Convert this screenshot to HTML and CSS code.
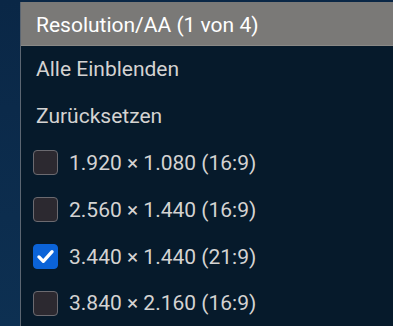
FILE: index.html
```html
<!DOCTYPE html>
<html lang="de">
<head>
<meta charset="utf-8">
<link rel="stylesheet" href="styles.css">
</head>
<body>
<div class="page">
  <div class="menu">
    <div class="menu-header">Resolution/AA (1 von 4)</div>
    <div class="menu-item">Alle Einblenden</div>
    <div class="menu-item">Zurücksetzen</div>
    <div class="menu-item check-item"><span class="box"></span><span>1.920 × 1.080 (16:9)</span></div>
    <div class="menu-item check-item"><span class="box"></span><span>2.560 × 1.440 (16:9)</span></div>
    <div class="menu-item check-item"><span class="box checked"><svg viewBox="0 0 24 24" width="21" height="21"><path d="M4.5 12.5 L9.5 17.5 L19.5 6.5" fill="none" stroke="#fff" stroke-width="3.8" stroke-linecap="round" stroke-linejoin="round"/></svg></span><span>3.440 × 1.440 (21:9)</span></div>
    <div class="menu-item check-item"><span class="box"></span><span>3.840 × 2.160 (16:9)</span></div>
  </div>
</div>
</body>
</html>
```
FILE: styles.css
```css
html, body {
  margin: 0;
  padding: 0;
  width: 393px;
  height: 326px;
  overflow: hidden;
}
body {
  background: linear-gradient(180deg, #0a2746 0%, #0d3052 100%);
  font-family: Roboto, "Noto Sans", sans-serif;
}
.page {
  padding: 2px 0 0 20px;
}
.menu {
  background: #061a2b;
  border-left: 1px solid #5c6672;
  display: flex;
  flex-direction: column;
}
.menu-header {
  height: 44px;
  box-sizing: border-box;
  display: flex;
  align-items: center;
  padding: 2px 0 0 15px;
  background: #7a7977;
  border-bottom: 1px solid #8a8986;
  color: #ffffff;
  font-size: 21px;
}
.menu-item {
  height: 46.8px;
  display: flex;
  align-items: center;
  padding-left: 15px;
  color: #d4d3d2;
  font-size: 21px;
}
.check-item {
  padding-left: 12px;
  gap: 11px;
}
.box {
  width: 25px;
  height: 25px;
  box-sizing: border-box;
  border: 1.5px solid #6b6a70;
  border-radius: 4px;
  background: #2c2930;
  display: flex;
  align-items: center;
  justify-content: center;
  flex: none;
}
.box.checked {
  background: #0b63d8;
  border-color: #0b63d8;
}
```
